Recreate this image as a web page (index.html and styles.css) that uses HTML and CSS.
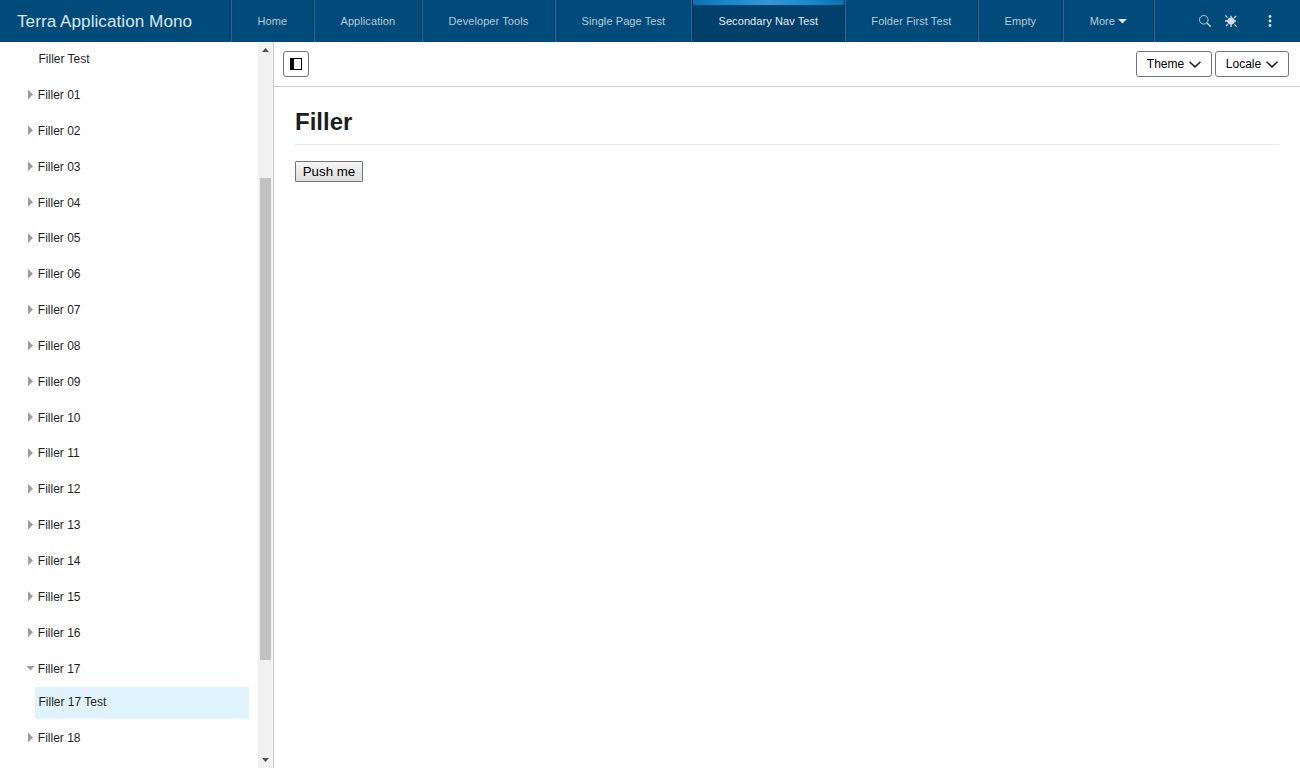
FILE: index.html
```
<!DOCTYPE html>
<html lang="en">
<head>
<meta charset="utf-8">
<title>Terra Application Mono</title>
<link rel="stylesheet" href="styles.css">
</head>
<body>
<header class="header">
  <div class="brand">Terra Application Mono</div>
  <nav class="tabs">
    <a class="tab">Home</a>
    <a class="tab">Application</a>
    <a class="tab">Developer Tools</a>
    <a class="tab before-active">Single Page Test</a>
    <a class="tab active">Secondary Nav Test</a>
    <a class="tab">Folder First Test</a>
    <a class="tab">Empty</a>
    <a class="tab">More<svg class="caret" width="9" height="5" viewBox="0 0 9 5"><path d="M0 0h9L4.5 4.5z" fill="#dce6ee"/></svg></a>
  </nav>
  <div class="utilities">
    <svg width="12" height="12" viewBox="0 0 12 12" fill="none" stroke="#c8d7e2"><circle cx="4.8" cy="4.8" r="4.3" stroke-width=".9"/><path d="M8 8l3.6 3.6" stroke-width="1.5"/></svg>
    <svg width="12" height="12" viewBox="0 0 12 12" stroke="#d0dde6"><circle cx="6" cy="6" r="3.6" fill="#d0dde6" stroke="none"/><path d="M.4 .4L2.6 2.6M9.4 9.4l2.2 2.2M11 1L9 3M3 9l-2 2" stroke-width="1.2"/><path d="M6 .8v2M6 9v3M0 6h3M9 6h2" stroke-width="1.4"/></svg>
    <svg class="dots" width="4" height="12" viewBox="0 0 4 12" fill="#dce6ee"><circle cx="2" cy="1.5" r="1.4"/><circle cx="2" cy="6" r="1.4"/><circle cx="2" cy="10.5" r="1.4"/></svg>
  </div>
</header>
<div class="body">
  <aside class="sidebar">
    <ul class="menu">
      <li class="item leaf">Filler Test</li>
      <li class="item"><i class="arrow"></i>Filler 01</li>
      <li class="item"><i class="arrow"></i>Filler 02</li>
      <li class="item"><i class="arrow"></i>Filler 03</li>
      <li class="item"><i class="arrow"></i>Filler 04</li>
      <li class="item"><i class="arrow"></i>Filler 05</li>
      <li class="item"><i class="arrow"></i>Filler 06</li>
      <li class="item"><i class="arrow"></i>Filler 07</li>
      <li class="item"><i class="arrow"></i>Filler 08</li>
      <li class="item"><i class="arrow"></i>Filler 09</li>
      <li class="item"><i class="arrow"></i>Filler 10</li>
      <li class="item"><i class="arrow"></i>Filler 11</li>
      <li class="item"><i class="arrow"></i>Filler 12</li>
      <li class="item"><i class="arrow"></i>Filler 13</li>
      <li class="item"><i class="arrow"></i>Filler 14</li>
      <li class="item"><i class="arrow"></i>Filler 15</li>
      <li class="item"><i class="arrow"></i>Filler 16</li>
      <li class="item"><i class="arrow open"></i>Filler 17</li>
      <li class="selected">Filler 17 Test</li>
      <li class="item"><i class="arrow"></i>Filler 18</li>
    </ul>
    <div class="scrollbar">
      <svg width="7" height="4" viewBox="0 0 7 4"><path d="M0 4h7L3.5 0z" fill="#505050"/></svg>
      <div class="thumb"></div>
      <svg width="7" height="4" viewBox="0 0 7 4"><path d="M0 0h7L3.5 4z" fill="#505050"/></svg>
    </div>
  </aside>
  <main class="main">
    <div class="toolbar">
      <button class="btn toggle"><svg width="12" height="12" viewBox="0 0 12 12"><path d="M0 0h12v12H0z"/><path d="M4 1h7v10H4z" fill="#fff"/></svg></button>
      <div class="actions">
        <button class="btn theme">Theme<svg width="12" height="7" viewBox="0 0 12 7"><path d="M.5 .7L6 5.9 11.5 .7" fill="none" stroke="#1c1f21" stroke-width="1.5"/></svg></button>
        <button class="btn locale">Locale<svg width="12" height="7" viewBox="0 0 12 7"><path d="M.5 .7L6 5.9 11.5 .7" fill="none" stroke="#1c1f21" stroke-width="1.5"/></svg></button>
      </div>
    </div>
    <section class="content">
      <h1>Filler</h1>
      <button class="push">Push me</button>
    </section>
  </main>
</div>
</body>
</html>
```
FILE: styles.css
```
* { box-sizing: border-box; }
body {
  margin: 0;
  height: 768px;
  display: flex;
  flex-direction: column;
  overflow: hidden;
  background: #fff;
  color: #1c1f21;
  font-family: "Liberation Sans", Arial, sans-serif;
  font-size: 12px;
}
svg { display: block; flex: none; }
.header {
  display: flex;
  flex: none;
  height: 42px;
  background: #004b7a;
}
.brand {
  width: 231px;
  padding-left: 17px;
  border-right: 1px solid #003051;
  color: #dce6ee;
  font-size: 17.14px;
  letter-spacing: .04px;
  line-height: 43px;
}
.tabs {
  display: grid;
  grid-template-columns: 83px 108px 133px 137px 153px 133px 85px 91px;
}
.tab {
  display: flex;
  align-items: center;
  justify-content: center;
  padding-right: .3px;
  border-left: 1px solid #1a70a5;
  border-right: 1px solid #003051;
  color: #b5cbda;
  font-size: 11px;
  letter-spacing: .08px;
}
.tab.before-active { border-right-color: #1a70a5; }
.tab.active {
  border-left-color: #003051;
  background: linear-gradient(90deg, #0e6fac, #1686ca 20%, #3495d3 50%, #1686ca 80%, #0e6fac) top / 100% 5px no-repeat #00406b;
  color: #e6edf2;
}
.caret { margin-left: 3px; }
.utilities {
  flex: 1;
  display: flex;
  align-items: center;
  gap: 14px;
  padding-left: 44px;
  border-left: 1px solid #1a70a5;
}
.dots { margin-left: 17px; }
.body { display: flex; flex: 1; min-height: 0; }
.sidebar {
  display: flex;
  width: 274px;
  border-right: 1px solid #c8cacb;
}
.menu {
  width: 258px;
  margin: -.77px 0 0;
  padding: 0;
  list-style: none;
}
.item {
  display: flex;
  align-items: center;
  height: 35.85px;
  padding-left: 26px;
}
.leaf { padding-left: 38.5px; }
.arrow {
  width: 5px;
  height: 10px;
  margin: 0 4.8px 1px 2px;
  background: #9b9da0;
  clip-path: polygon(0 0, 100% 50%, 0 100%);
}
.arrow.open {
  width: 9px;
  height: 5px;
  margin: 0 2.8px 1px 0;
  clip-path: polygon(0 0, 100% 0, 50% 100%);
}
.selected {
  height: 32px;
  margin: .6px 9px 1px 35px;
  padding-left: 3.5px;
  background: #e0f2fc;
  line-height: 31px;
}
.scrollbar {
  display: flex;
  flex-direction: column;
  align-items: center;
  width: 15px;
  padding: 6px 0;
  background: #f1f1f1;
}
.thumb {
  width: 11px;
  height: 482px;
  margin: 126px 0 98px;
  background: #c1c1c1;
}
.main { flex: 1; min-width: 0; }
.toolbar {
  display: flex;
  align-items: center;
  justify-content: space-between;
  height: 45px;
  padding: 0 11px 0 9px;
  border-bottom: 1px solid #c8cacb;
}
.actions { display: flex; gap: 3px; }
.btn {
  display: flex;
  align-items: center;
  justify-content: center;
  gap: 5px;
  height: 26px;
  padding: 0;
  border: 1px solid #6f7477;
  border-radius: 3px;
  background: #fff;
  color: #000;
  font: 12px "Liberation Sans", Arial, sans-serif;
}
.toggle { width: 26px; }
.theme { width: 76px; }
.locale { width: 74px; }
.content { padding: 21px 21px 0; }
h1 {
  height: 37px;
  margin: 0 0 16px;
  border-bottom: 1px solid #e8e9ea;
  font-size: 24px;
  line-height: 28px;
}
.push {
  display: block;
  width: 68px;
  height: 21px;
  padding: 0;
  border: 1px solid #767676;
  border-radius: 1px;
  background: linear-gradient(#f6f6f6, #dedede);
  color: #000;
  font: 13.33px "Liberation Sans", Arial, sans-serif;
}
```
